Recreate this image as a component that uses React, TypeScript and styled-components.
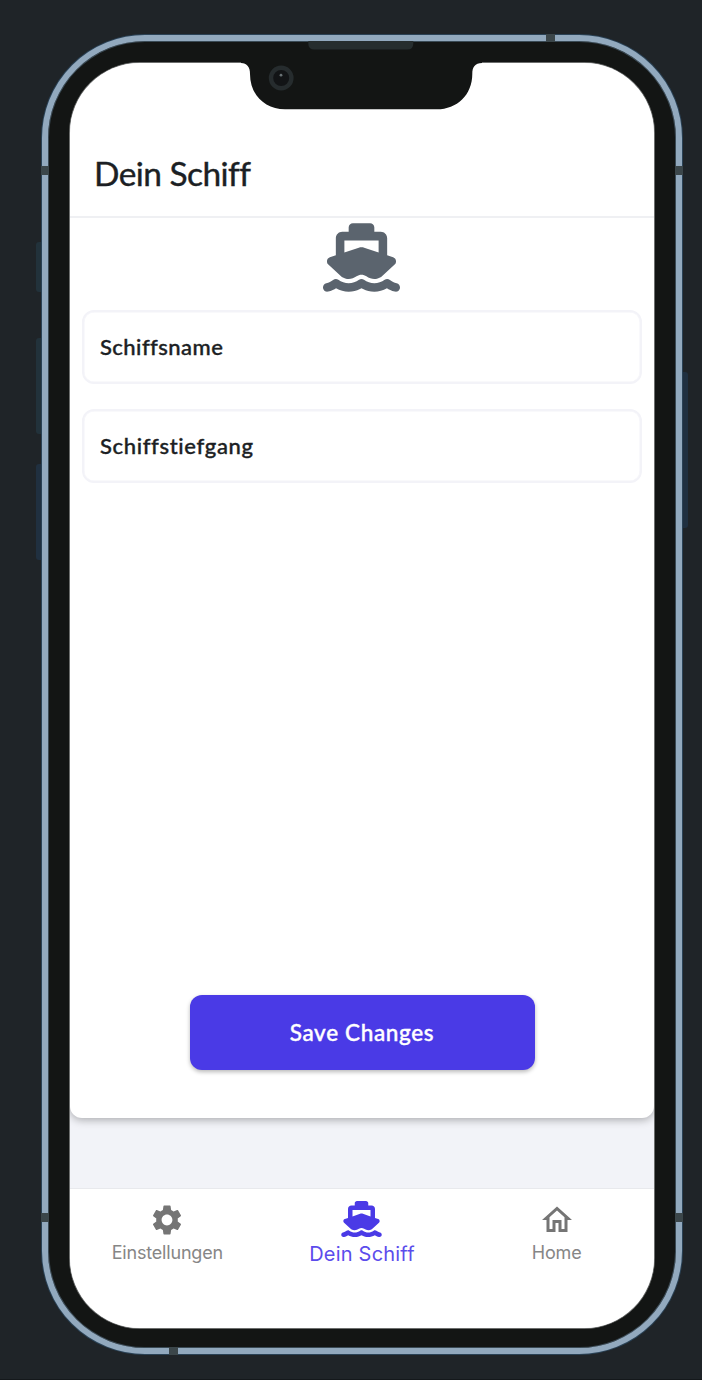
import React from "react";
import styled, { createGlobalStyle } from "styled-components";
import { MdSettings, MdOutlineHome } from "react-icons/md";

const GlobalStyle = createGlobalStyle`
  *, *::before, *::after { box-sizing: border-box; }
  body { margin: 0; background: #1f2428; }
`;

const Stage = styled.main`
  width: 702px;
  height: 1380px;
  padding: 35px 0 0 42px;
  background: #1f2428;
  border-bottom: 1px solid #14181b;
  overflow: hidden;
`;

const Device = styled.div`
  position: relative;
  width: 639.5px;
  height: 1319px;
  padding: 22px 21.5px 20px 22px;
  border: 6px solid #92a9be;
  border-radius: 103px;
  background: #131514;
  box-shadow: 0 0 0 1px #2a4256, inset 0 0 0 1px #3a4a55;
`;

const SideButton = styled.span<{ $side: "left" | "right"; $top: number; $length: number; $color: string }>`
  position: absolute;
  ${(p) => p.$side}: -12px;
  top: ${(p) => p.$top}px;
  width: 5px;
  height: ${(p) => p.$length}px;
  border-radius: ${(p) => (p.$side === "left" ? "3px 0 0 3px" : "0 3px 3px 0")};
  background: ${(p) => p.$color};
`;

const Antenna = styled.span<{ $edge: "left" | "right" | "top" | "bottom"; $at: number }>`
  position: absolute;
  background: #3b464a;
  ${(p) =>
    p.$edge === "left" || p.$edge === "right"
      ? `${p.$edge}: -7px; top: ${p.$at}px; width: 8px; height: 9px;`
      : `${p.$edge}: -7px; left: ${p.$at}px; width: 9px; height: 8px;`}
`;

const Notch = styled.svg`
  position: absolute;
  left: 190px;
  top: 0;
  width: 246px;
  height: 72px;
`;

const Screen = styled.div`
  display: flex;
  flex-direction: column;
  width: 584px;
  height: 1265px;
  border-radius: 70px;
  overflow: hidden;
  background: #f2f3f8;
  box-shadow: 0 0 0 1px #6c6e6d;
`;

const Card = styled.section`
  display: flex;
  flex-direction: column;
  flex: none;
  height: 1055px;
  border-radius: 0 0 12px 12px;
  background: #fff;
  box-shadow: 0 2px 8px rgba(0, 0, 0, 0.3);
`;

const Header = styled.header`
  display: flex;
  align-items: flex-end;
  height: 155px;
  padding: 0 24px 22px;
  border-bottom: 2px solid #eff0f3;
`;

const Title = styled.h1`
  margin: 0;
  color: #1c1f24;
  font: 400 33.5px/42px Lato, sans-serif;
  letter-spacing: -0.55px;
  -webkit-text-stroke: 0.4px currentColor;
`;

const Hero = styled.div`
  display: flex;
  justify-content: center;
  height: 92px;
  padding: 1px 0.5px 0 0;
  color: #5b646e;
  svg { width: 77px; height: 77px; }
`;

const Form = styled.form`
  display: flex;
  flex: 1;
  flex-direction: column;
  gap: 25px;
  padding: 0 12px 48px;
`;

const Field = styled.label`
  display: flex;
  align-items: center;
  height: 74px;
  padding: 0 16px;
  border: 2px solid #f3f3f8;
  border-radius: 12px;
  color: #1c1f24;
  box-shadow: inset 0 0 0 0.5px #f3f3f8;
`;

const FieldText = styled.span<{ $spacing: number }>`
  font: 500 22px/28px Lato, sans-serif;
  letter-spacing: ${(p) => p.$spacing}px;
  -webkit-text-stroke: 0.4px currentColor;
`;

const SaveButton = styled.button`
  width: 345px;
  height: 75px;
  margin: auto auto 0;
  padding: 0;
  border: 0;
  border-radius: 12px;
  background: #4a3ae6;
  color: #fff;
  font: 500 22.5px/28px Lato, sans-serif;
  letter-spacing: 0.65px;
  -webkit-text-stroke: 0.4px currentColor;
  box-shadow: 0 2px 4px rgba(0, 0, 0, 0.28);
`;

const TabBar = styled.nav`
  display: grid;
  grid-template-columns: repeat(3, 1fr);
  flex: none;
  height: 140px;
  margin-top: auto;
  border-top: 1px solid #e8e9ed;
  background: #fff;
`;

const Tab = styled.a<{ $active?: boolean }>`
  display: flex;
  flex-direction: column;
  align-items: center;
  padding-top: ${(p) => (p.$active ? 12 : 13)}px;
  color: ${(p) => (p.$active ? "#4a3ae6" : "#757575")};
  svg { width: ${(p) => (p.$active ? 41 : 36)}px; height: 36px; flex: none; }
`;

const TabLabel = styled.span<{ $active?: boolean }>`
  margin-top: ${(p) => (p.$active ? 4 : 2)}px;
  color: ${(p) => (p.$active ? "#5b4cec" : "#868686")};
  font: 400 ${(p) => (p.$active ? 20 : 18)}px/26px Inter, sans-serif;
  letter-spacing: ${(p) => (p.$active ? 0.2 : -0.18)}px;
  white-space: nowrap;
`;

function ShipIcon() {
  return (
    <svg viewBox="0 0 576 512" fill="currentColor" aria-hidden="true">
      <path d="M192 32c0-17.7 14.3-32 32-32H352c17.7 0 32 14.3 32 32V64h48c26.5 0 48 21.5 48 48V240l44.4 14.8c23.1 7.7 29.5 37.5 11.5 53.9l-101 92.6c-16.2 9.4-34.7 15.1-50.9 15.1c-19.6 0-40.8-7.7-59.2-20.3c-22.1-15.5-51.6-15.5-73.7 0c-17.1 11.8-38 20.3-59.2 20.3c-16.2 0-34.7-5.7-50.9-15.1l-101-92.6c-18-16.5-11.6-46.2 11.5-53.9L96 240V112c0-26.5 21.5-48 48-48h48V32zM160 218.7l107.8-35.9c13.1-4.4 27.3-4.4 40.5 0L416 218.7V128H160v90.7zM306.5 421.9C329 437.4 356.5 448 384 448c26.9 0 55.4-10.8 77.4-26.1c11.9-8.5 28.1-7.8 39.2 1.7c14.4 11.9 32.5 21 50.6 25.2c17.2 4 27.9 21.2 23.9 38.4s-21.2 27.9-38.4 23.9c-24.5-5.7-44.9-16.5-58.2-25C449.5 501.7 417 512 384 512c-31.9 0-60.6-9.9-80.4-18.9c-5.8-2.7-11.1-5.3-15.6-7.7c-4.5 2.4-9.7 5.1-15.6 7.7c-19.8 9-48.5 18.9-80.4 18.9c-33 0-65.5-10.3-94.5-25.8c-13.4 8.4-33.7 19.3-58.2 25c-17.2 4-34.4-6.7-38.4-23.9s6.7-34.4 23.9-38.4c18.1-4.2 36.2-13.3 50.6-25.2c11.1-9.4 27.3-10.1 39.2-1.7C136.7 437.2 165.1 448 192 448c27.5 0 55-10.6 77.5-26.1c11.1-7.9 25.9-7.9 37 0z" />
    </svg>
  );
}

export default function App() {
  return (
    <>
      <GlobalStyle />
      <Stage>
        <Device>
          <SideButton $side="left" $top={201} $length={50} $color="#22323b" />
          <SideButton $side="left" $top={297} $length={96} $color="#22323b" />
          <SideButton $side="left" $top={423} $length={96} $color="#203040" />
          <SideButton $side="right" $top={331} $length={156} $color="#203040" />
          <Screen>
            <Card>
              <Header>
                <Title>Dein Schiff</Title>
              </Header>
              <Hero>
                <ShipIcon />
              </Hero>
              <Form>
                <Field>
                  <FieldText $spacing={0.45}>Schiffsname</FieldText>
                </Field>
                <Field>
                  <FieldText $spacing={0.65}>Schiffstiefgang</FieldText>
                </Field>
                <SaveButton type="button">Save Changes</SaveButton>
              </Form>
            </Card>
            <TabBar>
              <Tab>
                <MdSettings />
                <TabLabel>Einstellungen</TabLabel>
              </Tab>
              <Tab $active>
                <ShipIcon />
                <TabLabel $active>Dein Schiff</TabLabel>
              </Tab>
              <Tab>
                <MdOutlineHome />
                <TabLabel>Home</TabLabel>
              </Tab>
            </TabBar>
          </Screen>
          <Notch viewBox="238 41 246 72">
            <path
              d="M241 60V63C247 63 250 67 250 74C250 95 265 109.3 285 109.3H437C457 109.3 472.3 95 472.3 74C472.3 67 475 63 482 63V60Z"
              fill="#131514"
            />
            <path d="M308.3 41H413.3V43.5Q413.3 49.5 407.3 49.5H314.3Q308.3 49.5 308.3 43.5Z" fill="#262d2e" />
            <circle cx="281.2" cy="78" r="10.2" fill="#121416" stroke="#262c2e" strokeWidth="4.4" />
            <circle cx="281" cy="75.2" r="1.4" fill="#687174" />
          </Notch>
          <Antenna $edge="left" $at={124.5} />
          <Antenna $edge="left" $at={1172} />
          <Antenna $edge="right" $at={124.5} />
          <Antenna $edge="right" $at={1172} />
          <Antenna $edge="top" $at={498} />
          <Antenna $edge="bottom" $at={120.5} />
        </Device>
      </Stage>
    </>
  );
}
